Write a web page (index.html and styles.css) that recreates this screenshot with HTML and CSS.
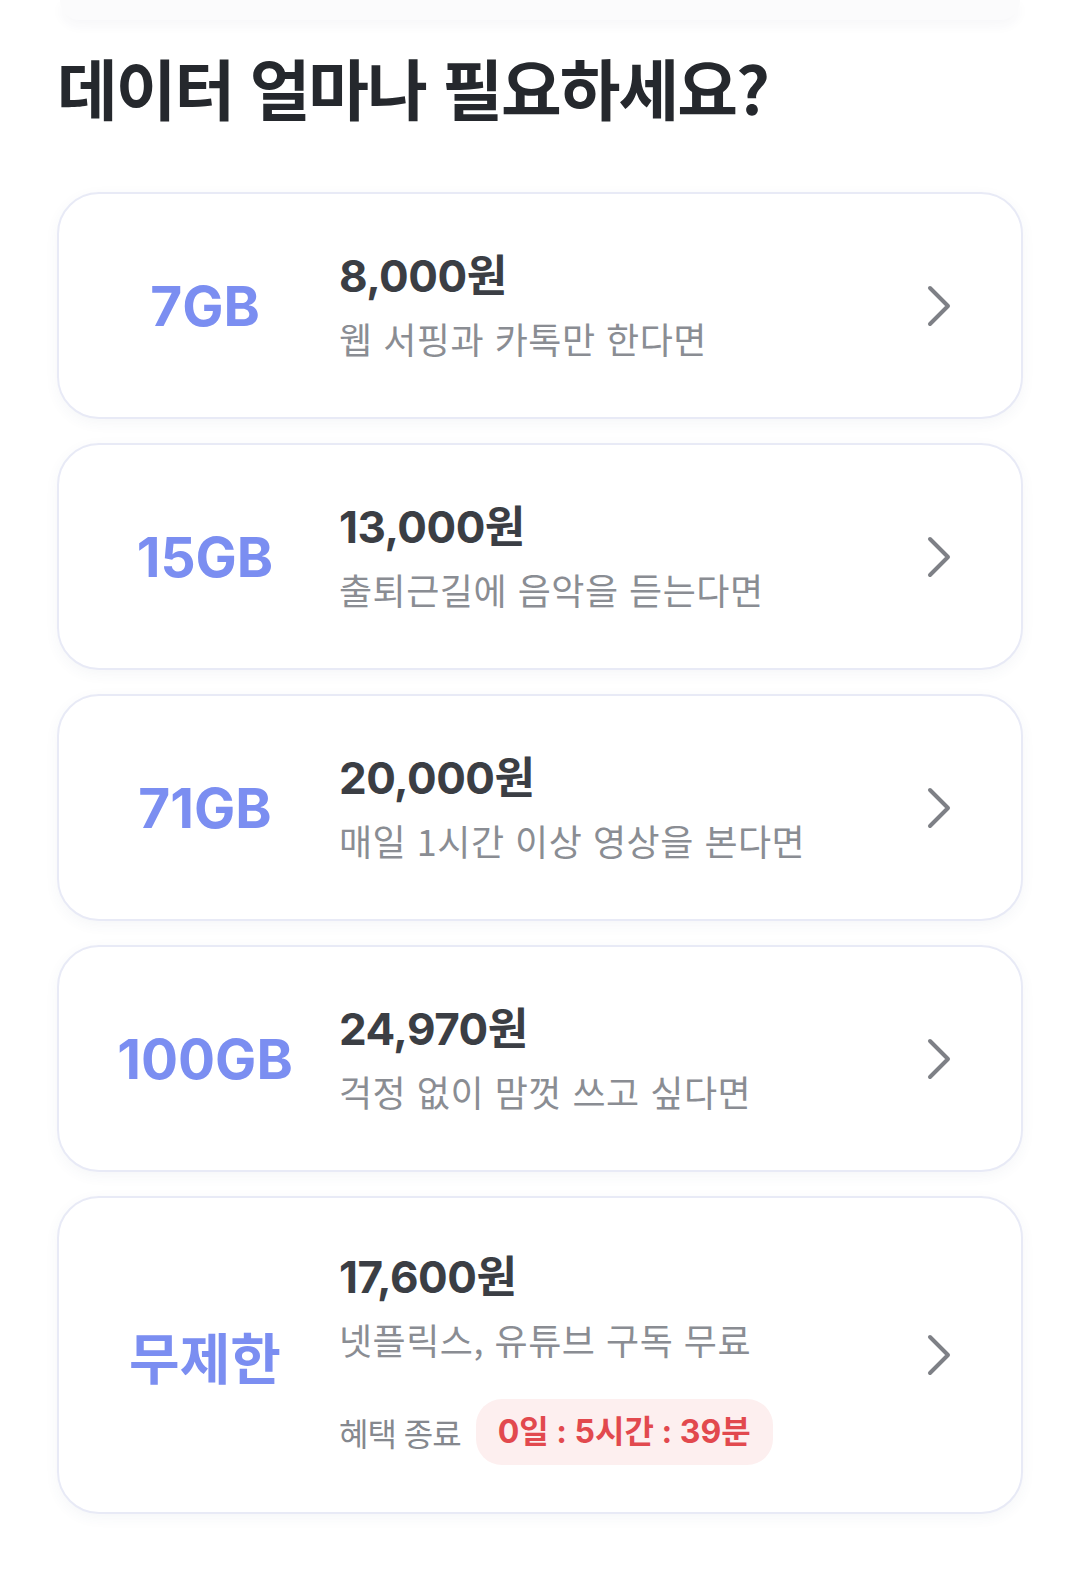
FILE: index.html
```html
<!DOCTYPE html>
<html lang="ko">

<head>
  <meta charset="UTF-8" />
  <meta name="viewport" content="width=device-width, initial-scale=1.0" />
  <title>데이터 요금제</title>
  <link rel="stylesheet" href="styles.css">
</head>

<body>
  <div class="top-edge"></div>

  <div class="page">
    <h1 class="title">데이터 얼마나 필요하세요?</h1>

    <div class="plan-list">
      <a class="plan" href="#">
        <div class="plan-size">7GB</div>
        <div class="plan-info">
          <div class="plan-price">8,000원</div>
          <div class="plan-desc">웹 서핑과 카톡만 한다면</div>
        </div>
        <svg class="chevron" viewBox="0 0 24 42"><path d="M3 3 L21 21 L3 39" /></svg>
      </a>

      <a class="plan" href="#">
        <div class="plan-size">15GB</div>
        <div class="plan-info">
          <div class="plan-price">13,000원</div>
          <div class="plan-desc">출퇴근길에 음악을 듣는다면</div>
        </div>
        <svg class="chevron" viewBox="0 0 24 42"><path d="M3 3 L21 21 L3 39" /></svg>
      </a>

      <a class="plan" href="#">
        <div class="plan-size">71GB</div>
        <div class="plan-info">
          <div class="plan-price">20,000원</div>
          <div class="plan-desc">매일 1시간 이상 영상을 본다면</div>
        </div>
        <svg class="chevron" viewBox="0 0 24 42"><path d="M3 3 L21 21 L3 39" /></svg>
      </a>

      <a class="plan" href="#">
        <div class="plan-size">100GB</div>
        <div class="plan-info">
          <div class="plan-price">24,970원</div>
          <div class="plan-desc">걱정 없이 맘껏 쓰고 싶다면</div>
        </div>
        <svg class="chevron" viewBox="0 0 24 42"><path d="M3 3 L21 21 L3 39" /></svg>
      </a>

      <a class="plan plan-tall" href="#">
        <div class="plan-size">무제한</div>
        <div class="plan-info">
          <div class="plan-price">17,600원</div>
          <div class="plan-desc">넷플릭스, 유튜브 구독 무료</div>
          <div class="timer-row">
            <span class="timer-label">혜택 종료</span>
            <span class="timer">0일 : 5시간 : 39분</span>
          </div>
        </div>
        <svg class="chevron" viewBox="0 0 24 42"><path d="M3 3 L21 21 L3 39" /></svg>
      </a>
    </div>
  </div>
</body>

</html>
```

FILE: styles.css
```css
body {
  margin: 0;
  background: #ffffff;
  font-family: Inter, "Noto Sans CJK KR", sans-serif;
  color: #26292e;
}

.top-edge {
  height: 20px;
  margin: 0 60px;
  background: #fbfbfc;
  border-radius: 0 0 20px 20px;
  box-shadow: 0 6px 12px rgba(40, 50, 90, 0.04);
}

.page {
  padding: 0 57px 60px 57px;
}

.title {
  margin: 24px 0 64px 0;
  font-family: "Noto Sans CJK KR", sans-serif;
  font-size: 66px;
  font-weight: 700;
  letter-spacing: -2px;
  line-height: 84px;
  color: #25282d;
}

.plan-list {
  display: flex;
  flex-direction: column;
  gap: 24px;
}

.plan {
  display: flex;
  align-items: center;
  min-height: 227px;
  box-sizing: border-box;
  padding: 0 70px 0 16px;
  border: 2px solid #e8eaf6;
  border-radius: 42px;
  background: #ffffff;
  box-shadow: 0 4px 14px rgba(60, 70, 120, 0.05);
  text-decoration: none;
}

.plan-tall {
  min-height: 318px;
}

.plan-size {
  width: 260px;
  flex-shrink: 0;
  text-align: center;
  font-size: 55px;
  font-weight: 700;
  color: #7b8ef1;
}

.plan-info {
  flex: 1;
  padding-left: 4px;
}

.plan-price {
  font-size: 44px;
  font-weight: 700;
  line-height: 64px;
  letter-spacing: -0.5px;
  color: #3b3e44;
}

.plan-desc {
  font-family: "Noto Sans CJK KR", sans-serif;
  font-size: 36px;
  line-height: 60px;
  letter-spacing: 0.5px;
  color: #8a8d93;
}

.timer-row {
  display: flex;
  align-items: center;
  gap: 15px;
  margin-top: 30px;
}

.timer-label {
  font-family: "Noto Sans CJK KR", sans-serif;
  font-size: 32px;
  letter-spacing: -1px;
  color: #85888e;
}

.timer {
  padding: 9px 22px;
  border-radius: 26px;
  background: #fdefef;
  font-size: 32px;
  font-weight: 700;
  line-height: 48px;
  color: #e2494e;
}

.chevron {
  width: 24px;
  height: 42px;
  flex-shrink: 0;
  fill: none;
  stroke: #7e8086;
  stroke-width: 4;
  stroke-linecap: round;
  stroke-linejoin: round;
}
```
